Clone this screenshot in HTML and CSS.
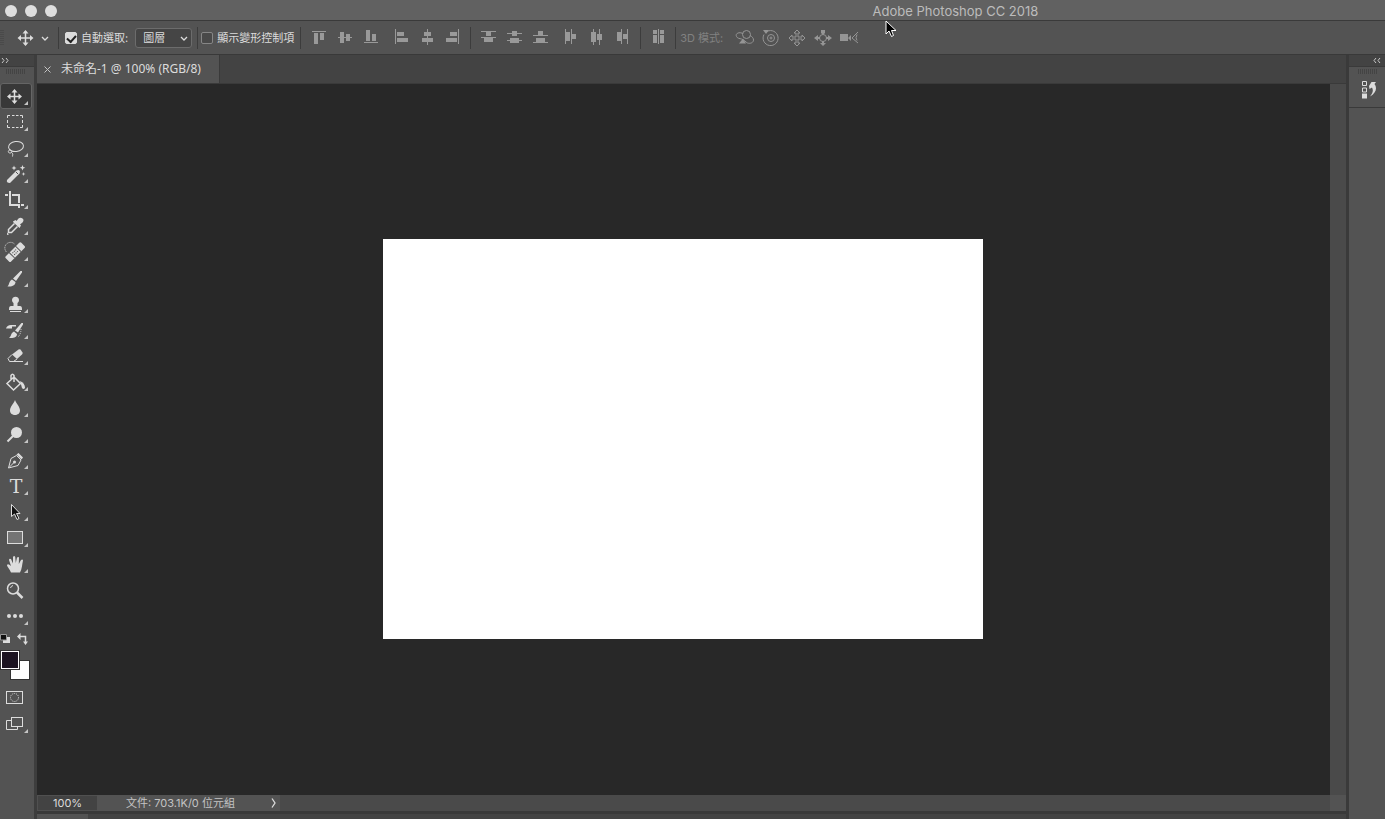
FILE: index.html
```html
<!DOCTYPE html>
<html lang="zh-Hant">
<head>
    <meta charset="UTF-8">
    <meta name="viewport" content="width=device-width, initial-scale=1.0">
    <title>Adobe Photoshop CC 2018</title>
    <link rel="stylesheet" href="styles.css">
</head>
<body>
    <header class="title-bar">
        <div class="window-buttons">
            <button type="button" aria-label="關閉"></button>
            <button type="button" aria-label="最小化"></button>
            <button type="button" aria-label="縮放"></button>
        </div>
        <h1>Adobe Photoshop CC 2018</h1>
    </header>

    <!-- Options bar -->
    <div class="options-bar">
        <div class="grip-vertical"></div>
        <button type="button" class="current-tool" aria-label="移動工具">
            <svg width="34" height="24" viewBox="0 0 34 24">
                <path d="M9.500 5v14M3 12h13" stroke="#dcdcdc" stroke-width="1.500"/>
                <path d="M9.500 4l-3 3.500h6zM9.500 20l-3-3.500h6zM1.500 12l3.500-3v6zM17.500 12l-3.500-3v6z" fill="#dcdcdc"/>
                <path d="M26 11l3 3 3-3" fill="none" stroke="#dcdcdc" stroke-width="1.300"/>
            </svg>
        </button>
        <div class="separator"></div>
        <div class="option">
            <input type="checkbox" id="auto-select" checked>
            <label for="auto-select">自動選取:</label>
        </div>
        <div class="select-box">
            <select aria-label="自動選取">
                <option>圖層</option>
                <option>群組</option>
            </select>
            <svg width="8" height="6" viewBox="0 0 8 6"><path d="M1 1l3 3 3-3" fill="none" stroke="#dcdcdc" stroke-width="1.300"/></svg>
        </div>
        <div class="separator"></div>
        <div class="option">
            <input type="checkbox" id="transform-controls">
            <label for="transform-controls">顯示變形控制項</label>
        </div>
        <div class="separator"></div>

        <div class="icon-group">
            <button type="button" aria-label="對齊頂端"><svg viewBox="0 0 26 24"><path d="M6 5h14v1H6zM8 7h4v11H8zM14 7h4v7h-4z"/></svg></button>
            <button type="button" aria-label="對齊垂直居中"><svg viewBox="0 0 26 24"><path d="M6 11h14v1H6zM8 6h4v11H8zM14 8h4v7h-4z"/></svg></button>
            <button type="button" aria-label="對齊底部"><svg viewBox="0 0 26 24"><path d="M6 16h14v1H6zM8 4h4v11H8zM14 8h4v7h-4z"/></svg></button>
        </div>
        <div class="icon-group">
            <button type="button" aria-label="對齊左側"><svg viewBox="0 0 26 24"><path d="M7 3h1v15H7zM9 6h7v4H9zM9 12h11v4H9z"/></svg></button>
            <button type="button" aria-label="對齊水平居中"><svg viewBox="0 0 26 24"><path d="M13 3h1v16h-1zM10 6h7v4h-7zM8 12h11v4H8z"/></svg></button>
            <button type="button" aria-label="對齊右側"><svg viewBox="0 0 26 24"><path d="M18 3h1v15h-1zM10 6h7v4h-7zM6 12h11v4H6z"/></svg></button>
        </div>
        <div class="separator"></div>
        <div class="icon-group">
            <button type="button" aria-label="均分頂端"><svg viewBox="0 0 26 24"><path d="M5 5h15v1H5zM10 6h5v4h-5zM5 11h15v1H5zM8 12h9v4H8z"/></svg></button>
            <button type="button" aria-label="均分垂直居中"><svg viewBox="0 0 26 24"><path d="M5 7h15v1H5zM10 5h5v5h-5zM5 14h15v1H5zM8 12h9v5H8z"/></svg></button>
            <button type="button" aria-label="均分底部"><svg viewBox="0 0 26 24"><path d="M5 9h15v1H5zM10 5h5v4h-5zM5 16h15v1H5zM8 12h9v4H8z"/></svg></button>
        </div>
        <div class="icon-group">
            <button type="button" aria-label="均分左側"><svg viewBox="0 0 26 24"><path d="M7 3h1v15H7zM8 6h4v9H8zM13 3h1v15h-1zM14 8h4v5h-4z"/></svg></button>
            <button type="button" aria-label="均分水平居中"><svg viewBox="0 0 26 24"><path d="M9 3h1v16H9zM7 6h5v10H7zM15 3h1v16h-1zM13 8h5v6h-5z"/></svg></button>
            <button type="button" aria-label="均分右側"><svg viewBox="0 0 26 24"><path d="M11 3h1v15h-1zM7 6h4v9H7zM17 3h1v15h-1zM13 8h4v5h-4z"/></svg></button>
        </div>
        <div class="separator"></div>
        <div class="icon-group single">
            <button type="button" aria-label="自動對齊圖層"><svg viewBox="0 0 26 24"><path d="M7 4h4v4H7zM7 9h4v8H7zM12 3h1v15h-1zM14 4h4v4h-4zM14 9h4v8h-4z"/></svg></button>
        </div>
        <div class="separator"></div>

        <span class="mode-label">3D 模式:</span>
        <div class="icon-group mode-icons">
            <button type="button" aria-label="環繞" disabled><svg viewBox="0 0 26 24"><circle cx="14.500" cy="8.500" r="4"/><path d="M11 7.500c-4-2-8 0-6.500 3 1 2 3 2 5 2.500 3 1 4 3 6 4 3 1 6-.5 6-3 0-2-1.500-3.500-3.500-4.500"/><path class="solid" d="M7 17.500l4-5 3 5z"/></svg></button>
            <button type="button" aria-label="滾動" disabled><svg viewBox="0 0 26 24"><path d="M9 5.500a7.500 7.500 0 1 1-3 3"/><circle cx="13" cy="12" r="3.500"/><circle cx="13" cy="12" r="1"/><path class="solid" d="M5 4h6L8 8z"/></svg></button>
            <button type="button" aria-label="平移" disabled><svg viewBox="0 0 26 24"><path d="M13 4l3 3h-2v4h4V9l3 3-3 3v-2h-4v4h2l-3 3-3-3h2v-4H8v2l-3-3 3-3v2h4V7h-2z"/></svg></button>
            <button type="button" aria-label="滑動" disabled><svg viewBox="0 0 26 24"><circle cx="13" cy="12" r="3.500"/><path class="solid" d="M11 4h4v3l-2 2-2-2zM12 15h2v2h2l-3 3-3-3h2zM4 12l4-3v2h2v2H8v2zM22 12l-4-3v2h-2v2h2v2z"/></svg></button>
            <button type="button" aria-label="縮放攝影機" disabled><svg viewBox="0 0 26 24"><path class="solid" d="M4 8h8v7H4zM12 12l3-3v6z"/><path d="M22 6l-6 6 6 5M21 8.500q-2 3.500 0 6"/></svg></button>
        </div>
    </div>

    <div class="workspace">
        <!-- Tools panel -->
        <aside class="tools">
            <div class="panel-head"><svg width="8" height="7" viewBox="0 0 8 7"><path d="M1 1l2 2.500-2 2.500M5 1l2 2.500-2 2.500"/></svg></div>
            <div class="grip"></div>
            <button type="button" class="tool active more" aria-label="移動">
                <svg viewBox="0 0 30 26"><path class="line" d="M14.500 8v11M9 13.500h11"/><path d="M14.500 6l-3 3.500h6zM14.500 21l-3-3.500h6zM7 13.500l3.500-3v6zM22 13.500l-3.500-3v6z"/></svg>
            </button>
            <button type="button" class="tool more" aria-label="矩形選取畫面">
                <svg viewBox="0 0 30 26"><path class="thin" d="M7.500 9V6.500H10M12 6.500h2.500M16 6.500h2.500M20 6.500h2.500V9M22.500 11v3M22.500 16v2.500H20M18.500 18.500H16M14.500 18.500H12M10 18.500H7.500V16M7.500 14v-3"/></svg>
            </button>
            <button type="button" class="tool more" aria-label="套索">
                <svg viewBox="0 0 30 26"><ellipse class="thin" cx="16" cy="11.500" rx="7.500" ry="5" transform="rotate(-8 16 11.500)"/><path class="thin" d="M10 15c-2 0-2.500 3 0 3 3 0 2-3 0-3M11.500 17.500c2 1 1 2.500 1 4"/></svg>
            </button>
            <button type="button" class="tool more" aria-label="魔術棒">
                <svg viewBox="0 0 30 26"><path d="M7 19L16.500 9.500q2-1 3 0t0 3L10 22q-4 0-3-3z"/><path d="M16 11l2 2" stroke="#535353"/><path d="M14 4.500l.7 1.800 1.800.7-1.800.7L14 9.500l-.7-1.800-1.800-.7 1.800-.7zM22.500 4l.8 2 2 .8-2 .8-.8 2-.8-2-2-.8 2-.8zM23.500 11l.5 1.500 1.500.5-1.500.5-.5 1.500-.5-1.500-1.500-.5 1.500-.5z"/></svg>
            </button>
            <button type="button" class="tool more" aria-label="裁切">
                <svg viewBox="0 0 30 26"><path d="M9 4h2v13h9v2H9zM5 7h3v2H5zM12 7h8v9h-2V9h-6zM18 19h2v2h-2zM21 17h3v2h-3z"/></svg>
            </button>
            <button type="button" class="tool more" aria-label="滴管">
                <svg viewBox="0 0 30 26"><path d="M13 8.500L15.500 7l1 1L18.500 5.500q2-1.500 4 0t0 4L20 11.500l1 1-1.500 2.500-6.500-6z"/><path d="M14.500 10.500L8.500 16.500v3h3l6-6" class="line"/><path d="M7 22v-2.500l2 2z"/></svg>
            </button>
            <button type="button" class="tool more" aria-label="修復筆刷">
                <svg viewBox="0 0 30 26"><g transform="rotate(-45 15 13)"><rect x="4" y="9.500" width="22" height="7.500" rx="1.500"/><path d="M10.500 9v8M19.500 9v8" stroke="#535353"/><path d="M12.500 11.500h1v1h-1zM14.500 11.500h1v1h-1zM16.500 11.500h1v1h-1zM12.500 14h1v1h-1zM14.500 14h1v1h-1zM16.500 14h1v1h-1z" fill="#444"/></g><path class="dots" d="M6.500 13a5 5 0 0 1 8-8"/></svg>
            </button>
            <button type="button" class="tool more" aria-label="筆刷">
                <svg viewBox="0 0 30 26"><path d="M22 6v1.500L16 16l-3-2.500L20.500 6zM12 14.500l3.500 2.500c0 3-3 5-8 4.500 2-1.500 1-5 4.500-7z"/></svg>
            </button>
            <button type="button" class="tool more" aria-label="仿製印章">
                <svg viewBox="0 0 30 26"><path d="M13.500 12a3.500 3.500 0 1 1 4 0v3H20q2 0 2 3v1H9v-1q0-3 2-3h2.500zM10 20h11v1H10z"/></svg>
            </button>
            <button type="button" class="tool more" aria-label="步驟記錄筆刷">
                <svg viewBox="0 0 30 26"><path d="M23 6v1.500l-5 8-3-2L21.500 6zM14 14.500l3 2.500c0 3-3 4.500-8 4 2.500-1.500 1.500-5 5-6.500zM6 11.500q1-3.500 5-3.500h5v1.500h-4v2z"/><path class="dots" d="M21 12q0 5-3 8"/></svg>
            </button>
            <button type="button" class="tool more" aria-label="橡皮擦">
                <svg viewBox="0 0 30 26"><path d="M18.500 6.500q1-.7 2 0l2 3q.5 1-.5 2L17 16l-5-4.500z"/><path class="thin" d="M12 11.500l-4 4 1.500 3h4L17 16"/><path d="M12 18h11v1H12z"/></svg>
            </button>
            <button type="button" class="tool more" aria-label="油漆桶">
                <svg viewBox="0 0 30 26"><path class="line" d="M14 8l6.500 6.500-7 6.500L7 14.500zM14 13V6.500q-1.500-2.500-3 0V11"/><path d="M20 12q5 2 5 7-1.500 2-3 0z"/></svg>
            </button>
            <button type="button" class="tool more" aria-label="模糊">
                <svg viewBox="0 0 30 26"><path d="M15 5c1 3.500 5 6.500 5 10.500 0 6-10 6-10 0C10 11.500 14 8.500 15 5z"/></svg>
            </button>
            <button type="button" class="tool more" aria-label="加亮">
                <svg viewBox="0 0 30 26"><circle cx="16.500" cy="11.500" r="5.500"/><path d="M13 15l-5.500 5.500" stroke="#dcdcdc" stroke-width="2"/></svg>
            </button>
            <button type="button" class="tool more" aria-label="筆型">
                <svg viewBox="0 0 30 26"><path class="thin" d="M16.500 8.500l4.500 4.500-3 5.500-9.500 2.500 2.500-9.500zM9 20.500l5-5"/><circle cx="14.500" cy="15" r="1.500"/><path d="M16.500 7.500l2-1.500 4.500 4.500-1.500 2z"/></svg>
            </button>
            <button type="button" class="tool more type-tool">T</button>
            <button type="button" class="tool more" aria-label="路徑選取">
                <svg viewBox="0 0 30 26"><path d="M11.500 5.500v12l3-2.500 2.500 5.500 2-1-2.500-5H20z" fill="#111" stroke="#dcdcdc"/></svg>
            </button>
            <button type="button" class="tool more" aria-label="矩形">
                <svg viewBox="0 0 30 26"><rect x="7.500" y="6.500" width="15" height="12" fill="#747474" stroke="#dcdcdc"/></svg>
            </button>
            <button type="button" class="tool more" aria-label="手形">
                <svg viewBox="0 0 30 26"><path d="M11 21.500C10 18.500 7 15.500 7 14q1-1.800 4 1L9 9q.2-2 2-1l2 4.500V6q1.200-1.800 2.200 0l.6 6L17 6.500q1.500-1.200 2 0L18.800 13l2.200-4q1.800-1 2 .5c-.8 3.500-1 8.500-3 12z"/></svg>
            </button>
            <button type="button" class="tool" aria-label="縮放顯示">
                <svg viewBox="0 0 30 26"><circle class="line" cx="13" cy="11.500" r="5.500"/><path d="M17 15.500l5.500 5.500" stroke="#dcdcdc" stroke-width="2.500"/><path class="thin" d="M10.500 11q.5-2 2.500-2.500"/></svg>
            </button>
            <button type="button" class="tool more" aria-label="編輯工具列">
                <svg viewBox="0 0 30 26"><circle cx="9" cy="13" r="2"/><circle cx="15" cy="13" r="2"/><circle cx="21" cy="13" r="2"/></svg>
            </button>
            <div class="color-shortcuts">
                <button type="button" aria-label="預設色彩"><svg width="11" height="11" viewBox="0 0 11 11"><path d="M3 4h7v6H3z" fill="#dcdcdc"/><path d="M.5 1.500h6v5.500h-6z" fill="#111" stroke="#999"/></svg></button>
                <button type="button" aria-label="切換色彩"><svg width="12" height="12" viewBox="0 0 12 12"><path class="line" d="M3 3.500h5.500V9"/><path d="M0 3.500L3.500 0v7zM8.500 12L6 8.500h5z"/></svg></button>
            </div>
            <div class="swatches">
                <button type="button" class="background-color" aria-label="背景色"></button>
                <button type="button" class="foreground-color" aria-label="前景色"></button>
            </div>
            <button type="button" class="tool" aria-label="快速遮色片">
                <svg viewBox="0 0 30 26"><rect class="thin" x="6.500" y="6.500" width="16" height="12"/><circle class="dots" cx="14.500" cy="12.500" r="4"/></svg>
            </button>
            <button type="button" class="tool more" aria-label="螢幕模式">
                <svg viewBox="0 0 30 26"><path class="thin" d="M11 9.500H6.500v9h11V16"/><rect class="thin" x="11.500" y="6.500" width="11" height="9"/></svg>
            </button>
        </aside>

        <main class="document-area">
            <div class="tab-bar">
                <div class="tab">
                    <button type="button" aria-label="關閉文件"><svg width="7" height="7" viewBox="0 0 7 7"><path d="M.5.5l6 6M6.500.5l-6 6" stroke="#c4c4c4"/></svg></button>
                    <span>未命名-1 @ 100% (RGB/8)</span>
                </div>
            </div>
            <div class="viewport">
                <div class="canvas-area">
                    <div class="canvas"></div>
                </div>
                <div class="scrollbar"></div>
            </div>
            <footer class="status-bar">
                <input type="text" value="100%" aria-label="顯示比例">
                <div class="doc-info">
                    <span>文件: 703.1K/0 位元組</span>
                    <button type="button" aria-label="狀態選項"><svg width="5" height="10" viewBox="0 0 5 10"><path d="M1 .5L4 5 1 9.500" fill="none" stroke="#dcdcdc" stroke-width="1.300"/></svg></button>
                </div>
                <div class="scroll-track"></div>
                <div class="scroll-corner"></div>
            </footer>
            <div class="timeline">
                <div class="timeline-tab"></div>
            </div>
        </main>

        <!-- Collapsed panels -->
        <aside class="side-panel">
            <div class="panel-head"><svg width="8" height="7" viewBox="0 0 8 7"><path d="M3 1L1 3.500 3 6M7 1L5 3.500 7 6"/></svg></div>
            <div class="grip"></div>
            <button type="button" class="history-button" aria-label="步驟記錄">
                <svg width="16" height="18" viewBox="0 0 16 18"><path d="M1.500.5h4v4h-4zM1.500 7h4v4h-4z" fill="none" stroke="#dcdcdc"/><path d="M1 12.500h5v5H1zM8 5l2.500-4H15l-1.500 2c3 4 1.500 9-4.500 12.500 3-4 3.500-6 2-9L8.500 8z" fill="#dcdcdc"/></svg>
            </button>
        </aside>
    </div>

    <svg class="cursor" width="12" height="18" viewBox="0 0 12 18"><path d="M1 1v13l3-3 2.500 5.500 2-1-2-5H11z" fill="#000" stroke="#fff"/></svg>
</body>
</html>
```

FILE: styles.css
```css
* {
    box-sizing: border-box;
}

body {
    margin: 0;
    height: 100vh;
    display: flex;
    flex-direction: column;
    overflow: hidden;
    background: #535353;
    color: #dcdcdc;
    font-family: Inter, "Noto Sans CJK TC", sans-serif;
    font-size: 11px;
    line-height: 16px;
}

button {
    display: block;
    margin: 0;
    padding: 0;
    border: none;
    background: none;
    color: inherit;
}

svg {
    display: block;
}

/* Title bar */
.title-bar {
    display: grid;
    grid-template-columns: 63% 1fr;
    align-items: center;
    height: 21px;
    background: #616161;
    border-bottom: 1px solid #3a3a3a;
}

.title-bar h1 {
    margin: 0;
    padding-top: 1px;
    font-size: 13px;
    font-weight: 400;
    color: #bcbcbc;
}

.window-buttons {
    display: flex;
    gap: 8px;
    padding: 1px 0 0 5px;
}

.window-buttons button {
    width: 12px;
    height: 12px;
    border-radius: 50%;
    background: #dedede;
}

/* Options bar */
.options-bar {
    display: flex;
    align-items: center;
    height: 34px;
    border-bottom: 1px solid #393939;
}

.grip-vertical {
    width: 4px;
    height: 16px;
    background: repeating-linear-gradient(#4a4a4a 0 1px, transparent 1px 2px);
}

.current-tool {
    margin: 0 8px 0 12px;
}

.separator {
    width: 1px;
    height: 22px;
    background: #3c3c3c;
}

.option {
    display: flex;
    align-items: center;
    gap: 4px;
    padding: 0 6px 0 3px;
}

.current-tool + .separator + .option {
    padding: 0 7px 0 6px;
}

.option input {
    appearance: none;
    width: 12px;
    height: 12px;
    margin: 0;
    border: 1px solid #868686;
    border-radius: 2px;
    background: #494949;
}

.option input:checked {
    background: #dcdcdc;
    border-color: #dcdcdc;
}

.option input:checked::after {
    content: "";
    display: block;
    width: 7px;
    height: 4px;
    margin: 2px 0 0 1px;
    border: solid #222;
    border-width: 0 0 2px 2px;
    transform: rotate(-48deg);
}

.select-box {
    position: relative;
    margin-right: 5px;
}

.select-box select {
    appearance: none;
    display: block;
    width: 57px;
    height: 20px;
    padding: 0 7px;
    border: 1px solid #6c6c6c;
    border-radius: 3px;
    background: #454545;
    color: inherit;
    font: inherit;
}

.select-box svg {
    position: absolute;
    right: 4px;
    top: 8px;
    pointer-events: none;
}

.icon-group {
    display: flex;
    margin-right: 4px;
}

.separator + .icon-group {
    margin-left: 5px;
}

.icon-group button,
.icon-group svg {
    width: 26px;
    height: 24px;
}

.icon-group svg {
    fill: #999;
}

.icon-group.single {
    margin-right: 3px;
}

.mode-label {
    margin: 0 9px 0 4px;
    color: #818181;
    white-space: nowrap;
}

.mode-icons svg {
    fill: none;
    stroke: #959595;
}

.mode-icons .solid {
    fill: #959595;
    stroke: none;
}

/* Workspace */
.workspace {
    display: flex;
    flex: 1;
    min-height: 0;
}

.tools {
    width: 37px;
    border-right: 3px solid #3d3d3d;
}

.panel-head {
    height: 12px;
    padding: 2px 1px;
    background: #434343;
    border-bottom: 1px solid #3a3a3a;
}

.panel-head path {
    fill: none;
    stroke: #c8c8c8;
}

.grip {
    width: 20px;
    height: 5px;
    margin: 2px 0 9px 6px;
    background: repeating-linear-gradient(90deg, #444 0 1px, transparent 1px 2px);
}

.tool {
    position: relative;
    width: 32px;
    height: 26px;
}

.tool.active {
    background: #383838;
    border-radius: 3px;
    box-shadow: inset 0 0 0 1px #656565;
}

.tool svg {
    width: 30px;
    height: 26px;
}

.tools svg {
    fill: #dcdcdc;
}

.tools .line {
    fill: none;
    stroke: #dcdcdc;
    stroke-width: 1.5;
}

.tools .thin {
    fill: none;
    stroke: #dcdcdc;
}

.tools .dots {
    fill: none;
    stroke: #dcdcdc;
    stroke-dasharray: 1 1;
}

.more::after {
    content: "";
    position: absolute;
    right: 4px;
    bottom: 4px;
    border-left: 4px solid transparent;
    border-bottom: 4px solid #c4c4c4;
}

.type-tool {
    padding: 0;
    font: 19px/26px "DejaVu Serif", serif;
}

.color-shortcuts {
    display: flex;
    align-items: flex-start;
    justify-content: space-between;
    height: 20px;
    padding: 4px 5px 0 0;
}

.swatches {
    display: grid;
    width: 30px;
    height: 30px;
    margin: 1px 0 5px;
}

.swatches button {
    grid-area: 1 / 1;
    width: 20px;
    height: 20px;
    border: 1px solid #333;
}

.swatches .background-color {
    place-self: end;
    background: #fff;
}

.swatches .foreground-color {
    place-self: start;
    background: #1c1421;
    box-shadow: inset 0 0 0 1px #fff;
}

/* Document */
.document-area {
    display: flex;
    flex: 1;
    flex-direction: column;
    min-width: 0;
}

.tab-bar {
    display: flex;
    height: 29px;
    background: #434343;
    border-bottom: 1px solid #3a3a3a;
}

.tab {
    display: flex;
    align-items: center;
    gap: 10px;
    min-width: 183px;
    padding: 0 10px 0 7px;
    background: #535353;
    border-right: 1px solid #3a3a3a;
    font-family: "Noto Sans", "Noto Sans CJK TC", sans-serif;
    font-size: 12px;
    white-space: nowrap;
}

.viewport {
    display: flex;
    flex: 1;
    min-height: 0;
}

.canvas-area {
    display: flex;
    flex: 1;
    align-items: center;
    justify-content: center;
    padding: 0 1px 1px 0;
    background: #282828;
}

.canvas {
    width: 600px;
    height: 400px;
    background: #fff;
}

.scrollbar {
    width: 16px;
    background: #4a4a4a;
}

.status-bar {
    display: flex;
    height: 16px;
    background: #4a4a4a;
}

.status-bar input {
    width: 60px;
    padding: 0 0 0 15px;
    border: 1px solid #505050;
    border-right: none;
    background: #434343;
    color: inherit;
    font: inherit;
    line-height: 14px;
}

.doc-info {
    display: flex;
    align-items: center;
    justify-content: space-between;
    width: 183px;
    padding: 0 4px 0 29px;
    background: #535353;
    color: #c4c4c4;
    white-space: nowrap;
}

.scroll-track {
    flex: 1;
}

.scroll-corner {
    width: 16px;
    background: #535353;
}

.timeline {
    height: 8px;
    background: #434343;
    border-top: 3px solid #393939;
}

.timeline-tab {
    width: 51px;
    height: 5px;
    background: #535353;
}

/* Collapsed panel */
.side-panel {
    width: 39px;
    border-left: 3px solid #3a3a3a;
}

.side-panel .panel-head {
    display: flex;
    justify-content: flex-end;
    padding-right: 4px;
}

.side-panel .grip {
    margin: 2px 0 7px 9px;
}

.history-button {
    width: 100%;
    height: 27px;
    padding: 0 0 8px 12px;
    border-bottom: 1px solid #3a3a3a;
}

.cursor {
    position: absolute;
    left: 885px;
    top: 20px;
    pointer-events: none;
}
```
